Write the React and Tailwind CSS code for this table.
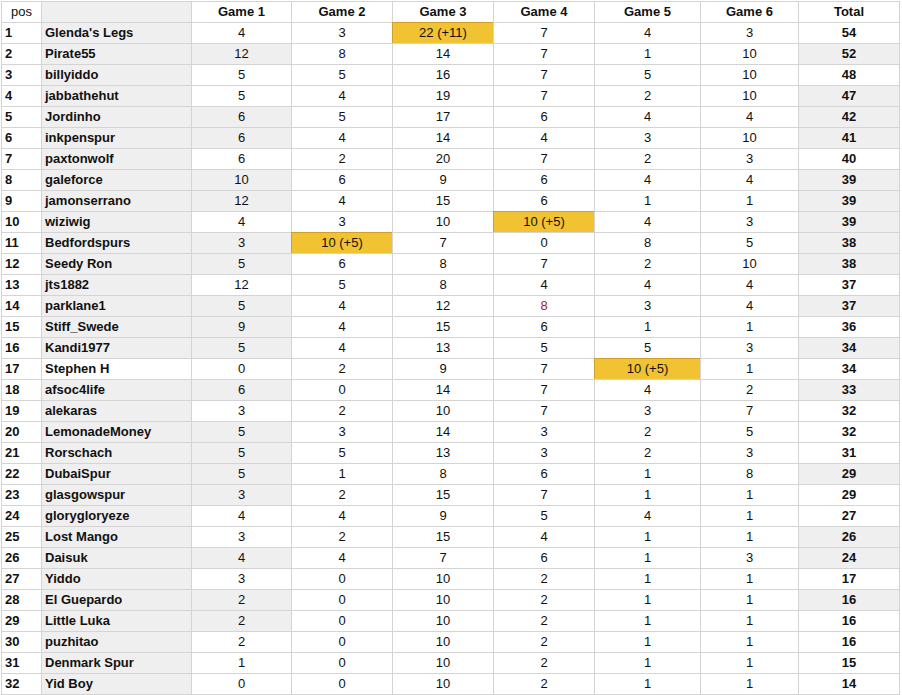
const COLS = ['pos', '', 'Game 1', 'Game 2', 'Game 3', 'Game 4', 'Game 5', 'Game 6', 'Total']

// name, g1..g6, total
const ROWS = [
  ["Glenda's Legs", 4, 3, '22 (+11)', 7, 4, 3, 54],
  ['Pirate55', 12, 8, 14, 7, 1, 10, 52],
  ['billyiddo', 5, 5, 16, 7, 5, 10, 48],
  ['jabbathehut', 5, 4, 19, 7, 2, 10, 47],
  ['Jordinho', 6, 5, 17, 6, 4, 4, 42],
  ['inkpenspur', 6, 4, 14, 4, 3, 10, 41],
  ['paxtonwolf', 6, 2, 20, 7, 2, 3, 40],
  ['galeforce', 10, 6, 9, 6, 4, 4, 39],
  ['jamonserrano', 12, 4, 15, 6, 1, 1, 39],
  ['wiziwig', 4, 3, 10, '10 (+5)', 4, 3, 39],
  ['Bedfordspurs', 3, '10 (+5)', 7, 0, 8, 5, 38],
  ['Seedy Ron', 5, 6, 8, 7, 2, 10, 38],
  ['jts1882', 12, 5, 8, 4, 4, 4, 37],
  ['parklane1', 5, 4, 12, 8, 3, 4, 37],
  ['Stiff_Swede', 9, 4, 15, 6, 1, 1, 36],
  ['Kandi1977', 5, 4, 13, 5, 5, 3, 34],
  ['Stephen H', 0, 2, 9, 7, '10 (+5)', 1, 34],
  ['afsoc4life', 6, 0, 14, 7, 4, 2, 33],
  ['alekaras', 3, 2, 10, 7, 3, 7, 32],
  ['LemonadeMoney', 5, 3, 14, 3, 2, 5, 32],
  ['Rorschach', 5, 5, 13, 3, 2, 3, 31],
  ['DubaiSpur', 5, 1, 8, 6, 1, 8, 29],
  ['glasgowspur', 3, 2, 15, 7, 1, 1, 29],
  ['glorygloryeze', 4, 4, 9, 5, 4, 1, 27],
  ['Lost Mango', 3, 2, 15, 4, 1, 1, 26],
  ['Daisuk', 4, 4, 7, 6, 1, 3, 24],
  ['Yiddo', 3, 0, 10, 2, 1, 1, 17],
  ['El Guepardo', 2, 0, 10, 2, 1, 1, 16],
  ['Little Luka', 2, 0, 10, 2, 1, 1, 16],
  ['puzhitao', 2, 0, 10, 2, 1, 1, 16],
  ['Denmark Spur', 1, 0, 10, 2, 1, 1, 15],
  ['Yid Boy', 0, 0, 10, 2, 1, 1, 14],
]

const NAME_WHITE = [17]
const G1_GREY = [2, 5, 6, 8, 9, 11, 12, 14, 15, 16, 18, 20, 21, 22, 23, 26, 28, 29]
const TOTAL_GREY = [2, 4, 5, 6, 8, 9, 10, 11, 12, 14, 16, 18, 22, 25, 26, 28]
const RED = [[14, 4]]

const cell = 'flex h-[21px] items-center border-b border-r border-[#d4d4d4] overflow-hidden whitespace-nowrap'

function Num({ value, grey, red }) {
  const bonus = typeof value === 'string'
  if (bonus) {
    return (
      <div className={`${cell} justify-center border-[#cfa02c] bg-[#f1c232] shadow-[-1px_-1px_0_0_#cfa02c]`}>
        {value}
      </div>
    )
  }
  return (
    <div className={`${cell} justify-center ${grey ? 'bg-[#efefef]' : 'bg-white'} ${red ? 'text-[#a61c1c]' : ''}`}>
      {value}
    </div>
  )
}

export default function App() {
  return (
    <div className="h-[695px] w-[902px] bg-white pl-px pt-px font-['Liberation_Sans',Arial,sans-serif] text-[13px] text-[#111]">
      <div className="grid w-max grid-cols-[40px_150px_100px_101px_101px_101px_106px_98px_101px] border-l border-t border-[#d4d4d4]">
        {COLS.map((col, i) => (
          <div
            key={i}
            className={`${cell} justify-center ${i === 1 ? 'bg-[#efefef]' : 'bg-white'} ${i > 1 ? 'font-bold' : ''}`}
          >
            {col}
          </div>
        ))}

        {ROWS.map((row, r) => {
          const pos = r + 1
          const [name, ...scores] = row
          const total = scores.pop()
          return [
            <div key={`p${pos}`} className={`${cell} bg-white pl-[3px] font-bold`}>
              {pos}
            </div>,
            <div
              key={`n${pos}`}
              className={`${cell} pl-[3px] font-bold ${NAME_WHITE.includes(pos) ? 'bg-white' : 'bg-[#efefef]'}`}
            >
              {name}
            </div>,
            ...scores.map((value, g) => (
              <Num
                key={`g${pos}-${g}`}
                value={value}
                grey={g === 0 && G1_GREY.includes(pos)}
                red={RED.some(([rr, gg]) => rr === pos && gg === g + 1)}
              />
            )),
            <div
              key={`t${pos}`}
              className={`${cell} justify-center font-bold ${TOTAL_GREY.includes(pos) ? 'bg-[#efefef]' : 'bg-white'}`}
            >
              {total}
            </div>,
          ]
        })}
      </div>
    </div>
  )
}
